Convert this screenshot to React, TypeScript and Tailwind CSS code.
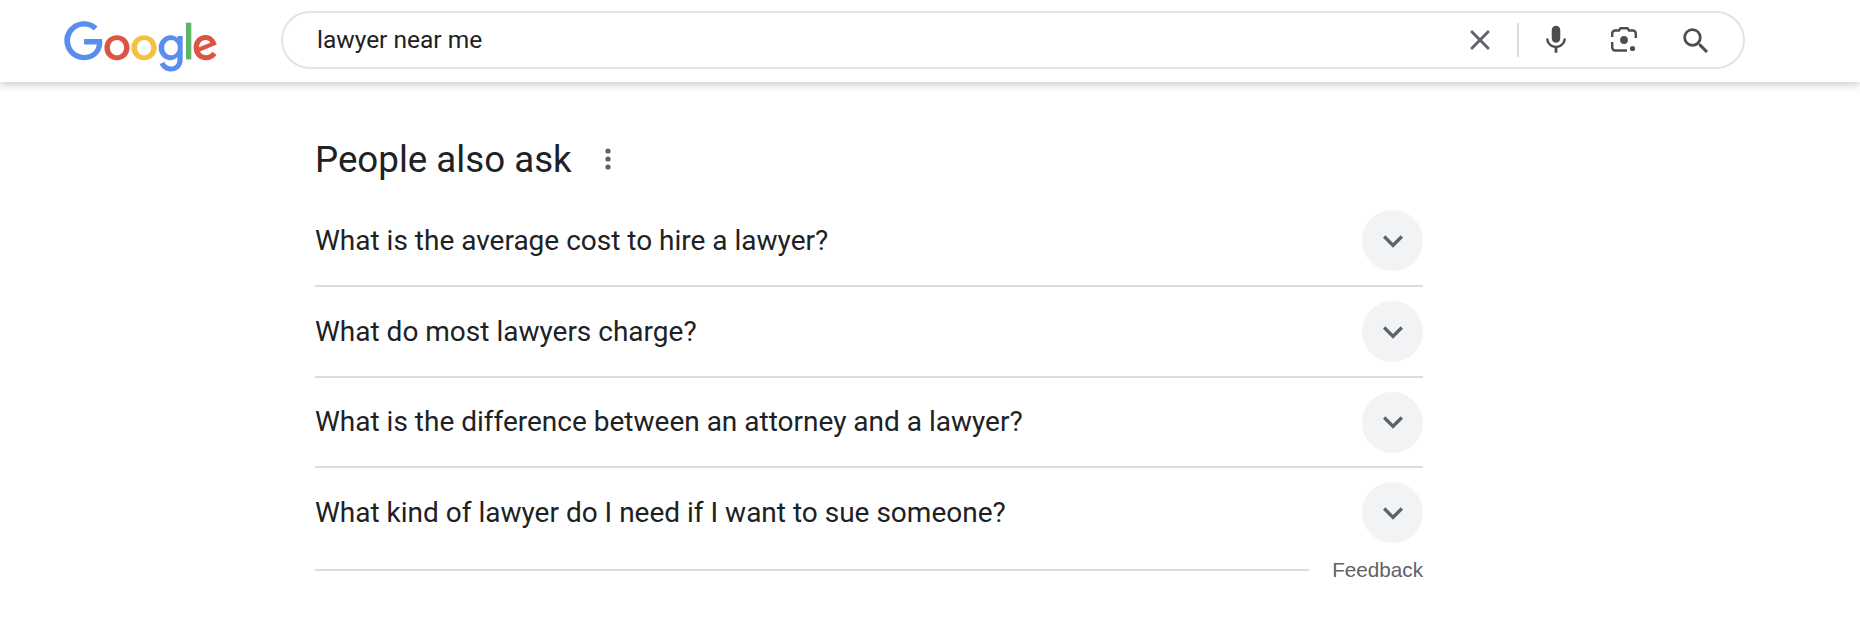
const questions = [
  { text: "What is the average cost to hire a lawyer?", h: "h-[91px]", border: true },
  { text: "What do most lawyers charge?", h: "h-[91px]", border: true },
  { text: "What is the difference between an attorney and a lawyer?", h: "h-[90px]", border: true },
  { text: "What kind of lawyer do I need if I want to sue someone?", h: "h-[89px]", border: false },
];

function GoogleLogo() {
  return (
    <svg viewBox="0 0 272 92" width="154" height="52" aria-label="Google">
      <path fill="#dc5442" d="M115.75 47.18c0 12.77-9.99 22.18-22.25 22.18s-22.25-9.41-22.25-22.18C71.25 34.32 81.24 25 93.5 25s22.25 9.32 22.25 22.18zm-9.74 0c0-7.98-5.79-13.44-12.51-13.44S80.99 39.2 80.99 47.18c0 7.9 5.79 13.44 12.51 13.44s12.51-5.55 12.51-13.44z" />
      <path fill="#f4c03f" d="M163.75 47.18c0 12.77-9.99 22.18-22.25 22.18s-22.25-9.41-22.25-22.18c0-12.85 9.99-22.18 22.25-22.18s22.25 9.32 22.25 22.18zm-9.74 0c0-7.98-5.79-13.44-12.51-13.44s-12.51 5.46-12.51 13.44c0 7.9 5.79 13.44 12.51 13.44s12.51-5.55 12.51-13.44z" />
      <path fill="#5a8df0" d="M209.75 26.34v39.82c0 16.38-9.66 23.07-21.08 23.07-10.75 0-17.22-7.19-19.66-13.07l8.48-3.53c1.51 3.61 5.21 7.87 11.17 7.87 7.31 0 11.84-4.51 11.84-13v-3.19h-.34c-2.18 2.69-6.38 5.04-11.68 5.04-11.09 0-21.25-9.66-21.25-22.09 0-12.52 10.16-22.26 21.25-22.26 5.29 0 9.49 2.35 11.68 4.96h.34v-3.61h9.25zm-8.56 20.92c0-7.81-5.21-13.52-11.84-13.52-6.72 0-12.35 5.71-12.35 13.52 0 7.73 5.63 13.36 12.35 13.36 6.63 0 11.84-5.63 11.84-13.36z" />
      <path fill="#5fb36a" d="M225 3v65h-9.5V3h9.5z" />
      <path fill="#dc5442" d="M262.02 54.48l7.56 5.04c-2.44 3.61-8.32 9.83-18.48 9.83-12.6 0-22.01-9.74-22.01-22.18 0-13.19 9.49-22.18 20.92-22.18 11.51 0 17.14 9.16 18.98 14.11l1.01 2.52-29.65 12.28c2.27 4.45 5.8 6.72 10.75 6.72 4.96 0 8.4-2.44 10.92-6.14zm-23.27-7.98l19.82-8.23c-1.09-2.77-4.37-4.7-8.23-4.7-4.95 0-11.84 4.37-11.59 12.93z" />
      <path fill="#5a8df0" d="M35.29 41.41V32H67c.31 1.64.47 3.58.47 5.68 0 7.06-1.93 15.79-8.15 22.01-6.05 6.3-13.78 9.66-24.02 9.66C16.32 69.35.36 53.89.36 34.91.36 15.93 16.32.47 35.3.47c10.5 0 17.98 4.12 23.6 9.49l-6.64 6.64c-4.03-3.78-9.49-6.72-16.97-6.72-13.86 0-24.7 11.17-24.7 25.03 0 13.86 10.84 25.03 24.7 25.03 8.99 0 14.11-3.61 17.39-6.89 2.66-2.66 4.41-6.46 5.1-11.65l-22.49.01z" />
    </svg>
  );
}

function Row({ text, h, border }: { text: string; h: string; border: boolean }) {
  return (
    <div className={`flex items-center justify-between ${h} ${border ? "border-b-2 border-[#dadce0]" : ""}`}>
      <span className="text-[28px] leading-[36px] text-[#202124]">{text}</span>
      <div className="flex h-[61px] w-[61px] items-center justify-center rounded-full bg-[#f1f3f4]">
        <svg viewBox="0 0 24 24" width="40" height="40" fill="#5f6368">
          <path d="M16.59 8.59 12 13.17 7.41 8.59 6 10l6 6 6-6z" />
        </svg>
      </div>
    </div>
  );
}

export default function App() {
  return (
    <div className="h-[628px] w-[1860px] bg-white font-['Roboto',sans-serif]">
      <header className="flex h-[82px] items-center shadow-[0_3px_8px_rgba(32,33,36,0.22)]">
        <div className="ml-[64px] flex w-[217px] shrink-0 pt-[11px]">
          <GoogleLogo />
        </div>
        <div className="mb-[2px] flex h-[58px] w-[1464px] items-center rounded-full border-2 border-[#e2e3e9] pl-[34px] pr-[30px]">
          <span className="flex-1 text-[24.5px] text-[#202124]">lawyer near me</span>
          <svg viewBox="0 0 24 24" width="34" height="34" fill="#5f6368">
            <path d="M19 6.41L17.59 5 12 10.59 6.41 5 5 6.41 10.59 12 5 17.59 6.41 19 12 13.41 17.59 19 19 17.59 13.41 12z" />
          </svg>
          <div className="ml-[20px] mr-[20px] h-[34px] w-[2px] bg-[#dadce0]" />
          <svg viewBox="0 0 24 24" width="34" height="34" fill="#4b4d50">
            <path d="M12 14c1.66 0 3-1.34 3-3V5c0-1.66-1.34-3-3-3S9 3.34 9 5v6c0 1.66 1.34 3 3 3z" />
            <path d="M17.3 11c0 3-2.54 5.1-5.3 5.1S6.7 14 6.7 11H5c0 3.41 2.72 6.23 6 6.72V21h2v-3.28c3.28-.49 6-3.31 6-6.72h-1.7z" />
          </svg>
          <svg className="ml-[38px]" viewBox="0 0 26 26" width="26" height="26" fill="none" stroke="#4b4d50" strokeWidth="2.4">
            <path d="M1.2 10V6.5a3 3 0 0 1 3-3H8l1.5-2.3h7L18 3.5h3.8a3 3 0 0 1 3 3V11" />
            <path d="M1.2 15v5.5a3 3 0 0 0 3 3H16" />
            <circle cx="13" cy="13" r="3.9" fill="#4b4d50" stroke="none" />
            <circle cx="21.5" cy="21.5" r="2.6" fill="#4b4d50" stroke="none" />
          </svg>
          <svg className="ml-[42px] mt-[1px]" viewBox="0 0 24 24" width="34" height="34" fill="#4b4d50">
            <path d="M15.5 14h-.79l-.28-.27A6.471 6.471 0 0 0 16 9.5 6.5 6.5 0 1 0 9.5 16c1.61 0 3.09-.59 4.23-1.57l.27.28v.79l5 4.99L20.49 19l-4.99-5zm-6 0C7.01 14 5 11.99 5 9.5S7.01 5 9.5 5 14 7.01 14 9.5 11.99 14 9.5 14z" />
          </svg>
        </div>
      </header>
      <main className="ml-[315px] w-[1108px] pt-[56px]">
        <div className="mb-[14px] flex h-[44px] items-center">
          <h2 className="text-[36.7px] font-normal leading-[44px] text-[#202124]">People also ask</h2>
          <svg className="ml-[33px] mb-[2px]" viewBox="0 0 6 22" width="6" height="22" fill="#5f6368">
            <circle cx="3" cy="3" r="2.6" />
            <circle cx="3" cy="11" r="2.6" />
            <circle cx="3" cy="19" r="2.6" />
          </svg>
        </div>
        {questions.map((q) => (
          <Row key={q.text} {...q} />
        ))}
        <div className="flex items-center gap-[23px]">
          <div className="h-[2px] flex-1 bg-[#dadce0]" />
          <span className="font-['Liberation_Sans',sans-serif] text-[20.7px] leading-[26px] text-[#5f6368]">Feedback</span>
        </div>
      </main>
    </div>
  );
}
